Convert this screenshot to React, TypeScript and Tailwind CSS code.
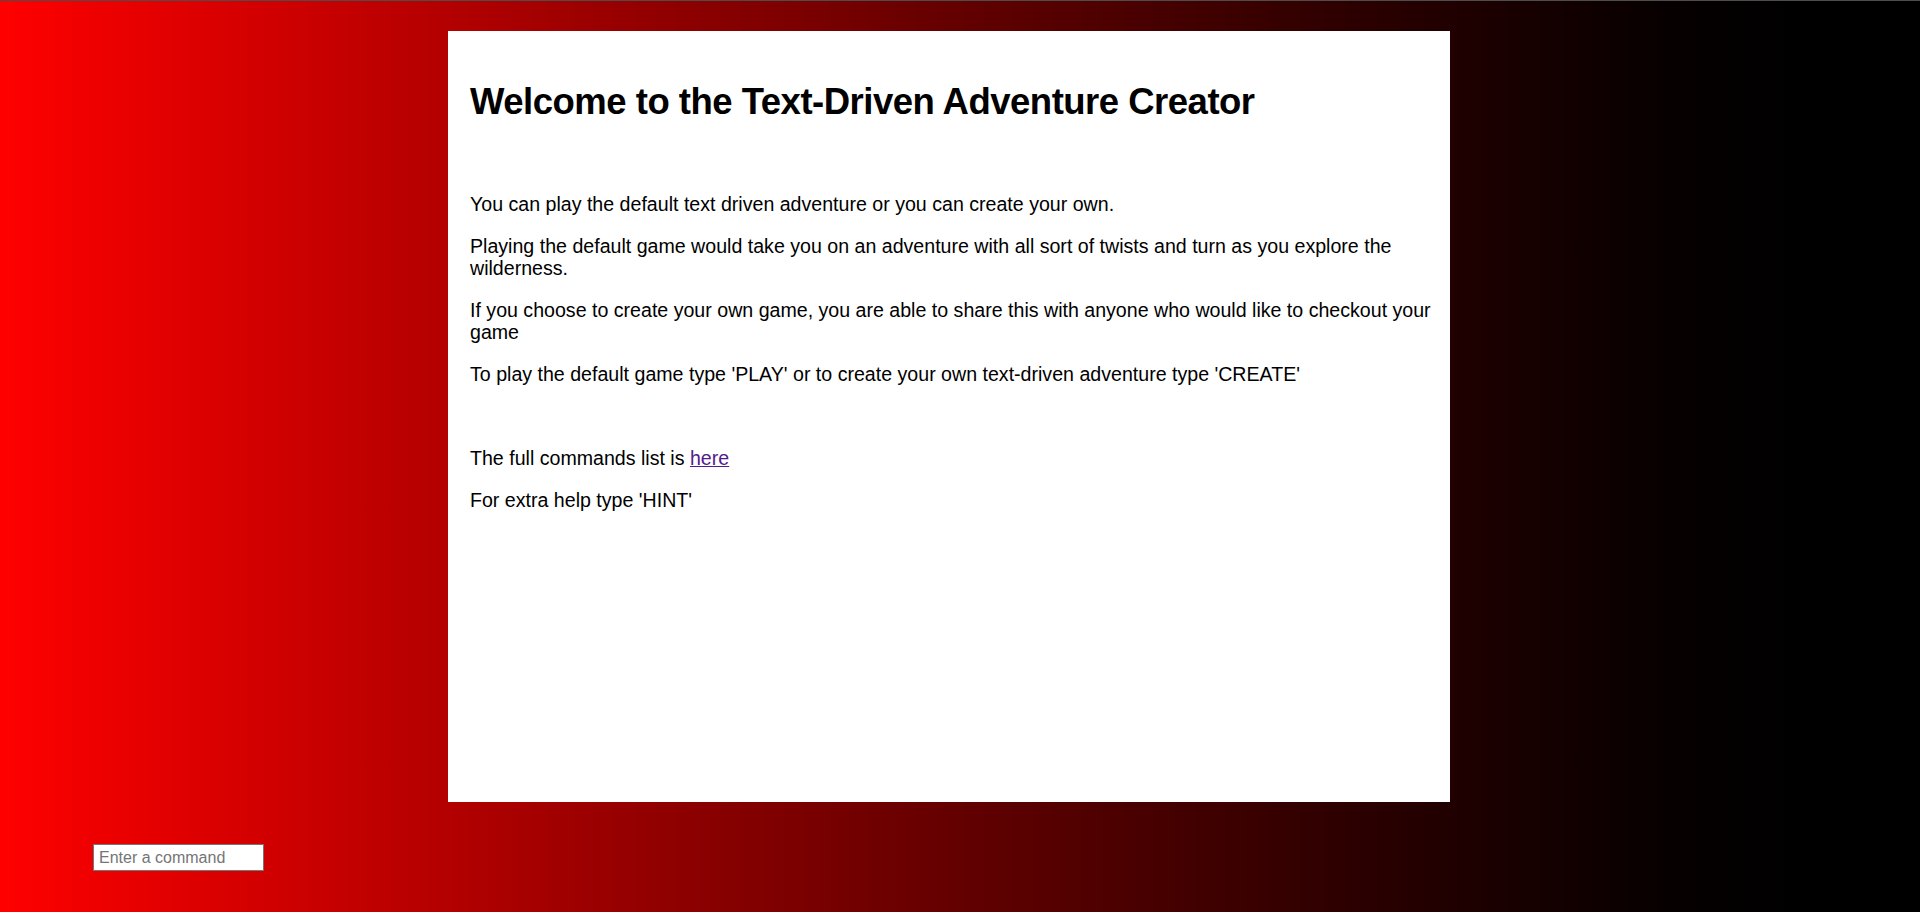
export default function App() {
  return (
    <div className="h-[912px] w-full overflow-hidden border-t border-[#4d4d4d] bg-gradient-to-r from-[#ff0000] to-[#000000] font-['Liberation_Sans',Arial,sans-serif]">
      {/* Main panel */}
      <div className="ml-[448px] mt-[30px] h-[771px] w-[1002px] bg-white pl-[22px] pr-[10px] pt-[49px] text-black">
        <h1 className="text-[36.5px] font-bold leading-[44px] tracking-[-0.5px]">
          Welcome to the Text-Driven Adventure Creator
        </h1>

        <div className="mt-[69px] flex flex-col gap-[20px] text-[19.6px] leading-[22px]">
          <p>You can play the default text driven adventure or you can create your own.</p>
          <p>
            Playing the default game would take you on an adventure with all sort of twists and turn as you explore
            the wilderness.
          </p>
          <p>
            If you choose to create your own game, you are able to share this with anyone who would like to checkout
            your game
          </p>
          <p>To play the default game type 'PLAY' or to create your own text-driven adventure type 'CREATE'</p>
          <p className="h-[22px]"></p>
          <p>
            The full commands list is{" "}
            <a href="#" className="text-[#551a8b] underline">
              here
            </a>
          </p>
          <p>For extra help type 'HINT'</p>
        </div>
      </div>

      {/* Command input */}
      <div className="ml-[93px] mt-[42px]">
        <input
          type="text"
          placeholder="Enter a command"
          className="h-[27px] w-[171px] border border-[#767676] bg-white px-[5px] text-[16px] text-black outline-none placeholder:text-[#757575]"
        />
      </div>
    </div>
  );
}
